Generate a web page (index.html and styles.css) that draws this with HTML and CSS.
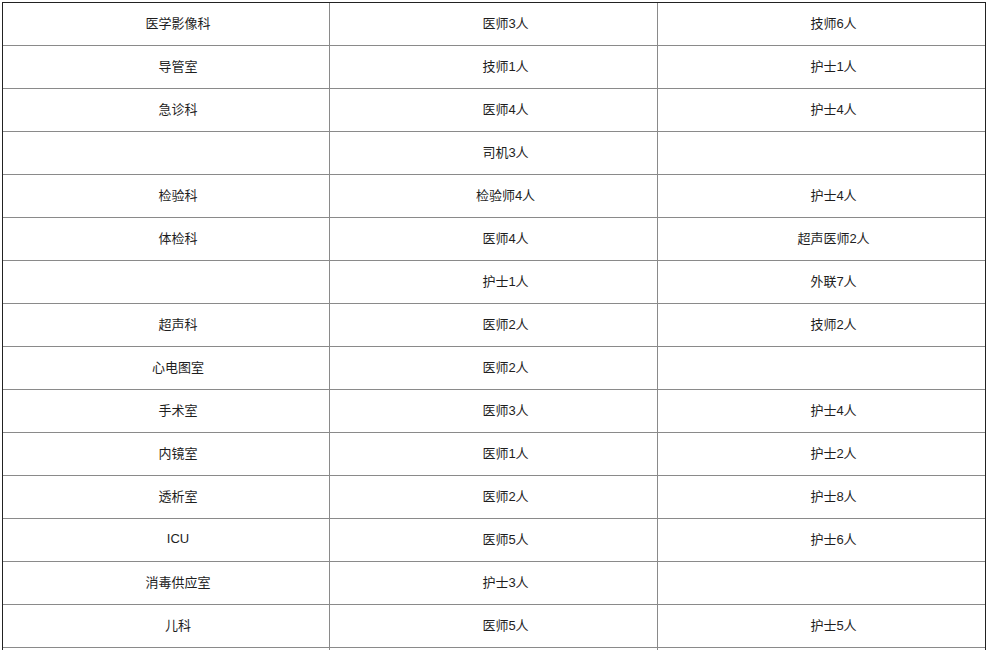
FILE: index.html
```html
<!DOCTYPE html>
<html lang="zh-CN">
<head>
<meta charset="utf-8">
<title>科室人员</title>
<link rel="stylesheet" href="styles.css">
</head>
<body>
<div class="sheet">
  <div class="row"><div class="cell">医学影像科</div><div class="cell">医师3人</div><div class="cell">技师6人</div></div>
  <div class="row"><div class="cell">导管室</div><div class="cell">技师1人</div><div class="cell">护士1人</div></div>
  <div class="row"><div class="cell">急诊科</div><div class="cell">医师4人</div><div class="cell">护士4人</div></div>
  <div class="row"><div class="cell"></div><div class="cell">司机3人</div><div class="cell"></div></div>
  <div class="row"><div class="cell">检验科</div><div class="cell">检验师4人</div><div class="cell">护士4人</div></div>
  <div class="row"><div class="cell">体检科</div><div class="cell">医师4人</div><div class="cell">超声医师2人</div></div>
  <div class="row"><div class="cell"></div><div class="cell">护士1人</div><div class="cell">外联7人</div></div>
  <div class="row"><div class="cell">超声科</div><div class="cell">医师2人</div><div class="cell">技师2人</div></div>
  <div class="row"><div class="cell">心电图室</div><div class="cell">医师2人</div><div class="cell"></div></div>
  <div class="row"><div class="cell">手术室</div><div class="cell">医师3人</div><div class="cell">护士4人</div></div>
  <div class="row"><div class="cell">内镜室</div><div class="cell">医师1人</div><div class="cell">护士2人</div></div>
  <div class="row"><div class="cell">透析室</div><div class="cell">医师2人</div><div class="cell">护士8人</div></div>
  <div class="row"><div class="cell">ICU</div><div class="cell">医师5人</div><div class="cell">护士6人</div></div>
  <div class="row"><div class="cell">消毒供应室</div><div class="cell">护士3人</div><div class="cell"></div></div>
  <div class="row"><div class="cell">儿科</div><div class="cell">医师5人</div><div class="cell">护士5人</div></div>
  <div class="row"><div class="cell"></div><div class="cell"></div><div class="cell"></div></div>
</div>
</body>
</html>
```
FILE: styles.css
```css
html, body {
  margin: 0;
  padding: 0;
  background: #fff;
}
body {
  padding: 2px;
  font-family: "Liberation Sans", "Noto Sans CJK SC", sans-serif;
  font-size: 13px;
  color: #1e1e1e;
}
.sheet {
  width: 984px;
  box-sizing: border-box;
  border: 1px solid #222;
  border-bottom: none;
}
.row {
  display: grid;
  grid-template-columns: 327px 328px 327px;
}
.cell {
  height: 43px;
  box-sizing: border-box;
  border-bottom: 1px solid #8a8a8a;
  border-right: 1px solid #8a8a8a;
  display: flex;
  align-items: center;
  justify-content: center;
  padding-left: 24px;
  padding-bottom: 3px;
}
.cell:last-child {
  border-right: none;
}
```
